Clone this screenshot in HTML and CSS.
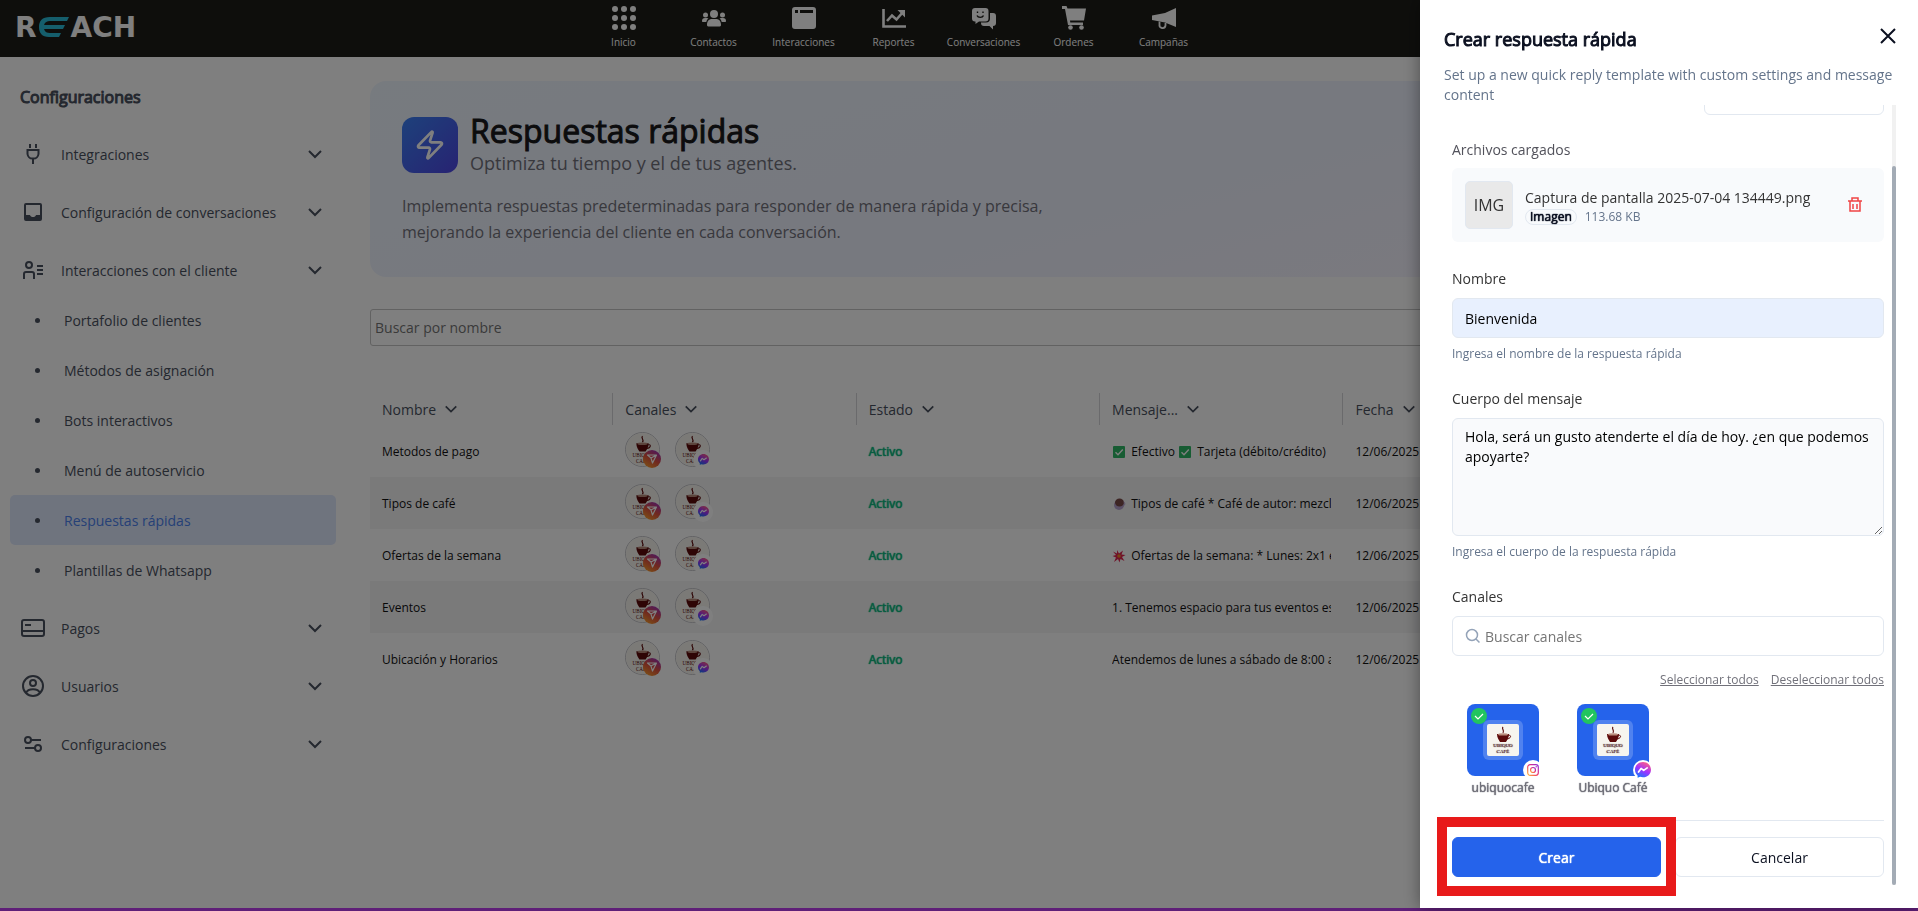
FILE: index.html
```html
<!DOCTYPE html>
<html lang="es">
<head>
  <meta charset="UTF-8">
  <meta name="viewport" content="width=device-width, initial-scale=1.0">
  <title>Reach - Respuestas rápidas</title>
  <link rel="stylesheet" href="styles.css">
</head>
<body>

  <!-- shared icons -->
  <svg class="sprite" aria-hidden="true">
    <defs>
      <linearGradient id="igGrad" x1="0" y1="1" x2="1" y2="0">
        <stop offset="0" stop-color="#fdb83a"/>
        <stop offset="0.5" stop-color="#f0306b"/>
        <stop offset="1" stop-color="#8a2be0"/>
      </linearGradient>
      <linearGradient id="igRound" x1="0.2" y1="1" x2="0.8" y2="0">
        <stop offset="0" stop-color="#f9a02c"/>
        <stop offset="0.5" stop-color="#e0503f"/>
        <stop offset="1" stop-color="#9b2fc0"/>
      </linearGradient>
      <linearGradient id="msgGrad" x1="0.2" y1="1" x2="0.7" y2="0">
        <stop offset="0" stop-color="#0a7cff"/>
        <stop offset="0.5" stop-color="#a033ff"/>
        <stop offset="1" stop-color="#ff5c87"/>
      </linearGradient>
    </defs>
    <symbol id="chevron" viewBox="0 0 16 16">
      <path d="M2 5l6 6 6-6" fill="none" stroke="currentColor" stroke-width="2"/>
    </symbol>
    <symbol id="ig-send" viewBox="0 0 18 18">
      <circle cx="9" cy="9" r="9" fill="url(#igRound)"/>
      <path d="M4.500 5h9L9.500 13 8 8zM8 8l5.500-3" fill="none" stroke="#fff" stroke-width="1.200" stroke-linejoin="round"/>
    </symbol>
    <symbol id="messenger" viewBox="0 0 16 16">
      <path d="M8 0C3.500 0 0 3.300 0 7.700c0 2.300 1 4.300 2.600 5.700v2.400l2.500-1c.9.300 1.900.5 2.900.5 4.500 0 8-3.300 8-7.600S12.500 0 8 0z" fill="url(#msgGrad)"/>
      <path d="M3.500 10l2.600-3.600 2.600 2 3.500-2.500" fill="none" stroke="#fff" stroke-width="1.700" stroke-linejoin="round" stroke-linecap="round"/>
    </symbol>
    <symbol id="instagram" viewBox="0 0 12 12">
      <rect x="0.700" y="0.700" width="10.600" height="10.600" rx="2.500" fill="none" stroke="url(#igGrad)" stroke-width="1.200"/>
      <circle cx="6" cy="6" r="2.500" fill="none" stroke="url(#igGrad)" stroke-width="1.200"/>
      <circle cx="9.200" cy="2.800" r="0.700" fill="#a033c0"/>
    </symbol>
    <symbol id="check-box" viewBox="0 0 14 14">
      <rect x="1" y="1" width="12" height="12" rx="1" fill="#2fb866"/>
      <path d="M3.500 7.200l2.500 2.500L10.800 4.500" fill="none" stroke="#fff" stroke-width="1.400"/>
    </symbol>
  </svg>
  <svg class="hidden" aria-hidden="true">
    <symbol id="cafe" viewBox="0 0 32 32">
      <rect width="32" height="32" fill="#f7f5ef"/>
      <path d="M16 3c-2 2 2 3 0 6" fill="none" stroke="#5c0a0a" stroke-width="1.2"/>
      <path d="M10 10h12c0 4-2 6-3 8h-6c-1-2-3-4-3-8z" fill="#5c0a0a"/>
      <ellipse cx="16" cy="10.400" rx="5" ry="1.200" fill="#b98b7a"/>
      <path d="M21.500 11.500c3-1 3 3-1.500 3.500" fill="none" stroke="#5c0a0a" stroke-width="1"/>
      <text x="16" y="23" class="cafe-text">UBIQUO</text>
      <text x="16" y="29" class="cafe-text">CAFÉ</text>
    </symbol>
  </svg>

  <header class="navbar">
    <a class="logo" href="#" aria-label="Reach"><span>R</span><svg class="logo-mark" viewBox="0 0 30 20"><path d="M30 0H11C3 0 0 4 0 10s3 10 10 10h10l2-4H11c-3 0-5-1-6-4h19l2-4H5c1-3 3-4 6-4h17z" fill="#2bbcd8"/></svg><span>ACH</span></a>
    <nav>
      <a href="#"><svg viewBox="0 0 24 24"><g fill="currentColor"><circle cx="3" cy="3" r="3"/><circle cx="12" cy="3" r="3"/><circle cx="21" cy="3" r="3"/><circle cx="3" cy="12" r="3"/><circle cx="12" cy="12" r="3"/><circle cx="21" cy="12" r="3"/><circle cx="3" cy="21" r="3"/><circle cx="12" cy="21" r="3"/><circle cx="21" cy="21" r="3"/></g></svg>Inicio</a>
      <a href="#"><svg viewBox="0 0 24 24"><g fill="currentColor"><circle cx="12" cy="8" r="4"/><circle cx="3.500" cy="9" r="2.500"/><circle cx="20.500" cy="9" r="2.500"/><path d="M5 19c0-4 2-6 5-6h4c3 0 5 2 5 6 0 1-1 1.500-2 1.500H7c-1 0-2-.5-2-1.500zM0 15c0-2 1-3 3-3h2c.6 0 1 .2 1.500.5C5 13.500 4.500 15 4.300 16H1c-.6 0-1-.4-1-1zM24 15c0-2-1-3-3-3h-2c-.6 0-1 .2-1.500.5 1.500 1 2 2.500 2.200 3.500H23c.6 0 1-.4 1-1z"/></g></svg>Contactos</a>
      <a href="#"><svg viewBox="0 0 24 24"><path fill="currentColor" fill-rule="evenodd" d="M3 1h18a3 3 0 0 1 3 3v16a3 3 0 0 1-3 3H3a3 3 0 0 1-3-3V4a3 3 0 0 1 3-3zm0 3v3h3V4zm5 0v3h13V4z"/></svg>Interacciones</a>
      <a href="#"><svg viewBox="0 0 24 24"><path fill="none" stroke="currentColor" stroke-width="2.600" d="M1.500 3v17.500H24M5 15l5-5.500 4.500 4L21 6"/><path fill="currentColor" d="M15.500 4H23v7.500z"/></svg>Reportes</a>
      <a href="#"><svg viewBox="0 0 24 24"><path fill="currentColor" d="M18 7h3a3 3 0 0 1 3 3v7a3 3 0 0 1-3 3v3.500L17.500 20H12a3 3 0 0 1-3-3v-.5h5a4 4 0 0 0 4-4z"/><path fill="currentColor" d="M3 2h10.500a3 3 0 0 1 3 3v7.500a3 3 0 0 1-3 3H7L3.500 18v-2.500H3a3 3 0 0 1-3-3V5a3 3 0 0 1 3-3z"/><path fill="none" stroke="#1d1d19" stroke-width="1.400" d="M5 9.500c1 2.500 5.500 2.500 6.500 0M5.500 5.500V7M11 5.500V7"/></svg>Conversaciones</a>
      <a href="#"><svg viewBox="0 0 24 24"><path fill="currentColor" d="M0 0h4.500l1 2.500H24l-2 12H8l.3 2H21V19H6L3 3H0z"/><circle fill="currentColor" cx="8.500" cy="21.500" r="2.300"/><circle fill="currentColor" cx="19.500" cy="21.500" r="2.300"/></svg>Ordenes</a>
      <a href="#"><svg viewBox="0 0 24 24"><path fill="currentColor" d="M24 2v19L13 16.500 0 14V9.500L13 7z"/><path fill="none" stroke="currentColor" stroke-width="1.800" d="M7.500 15.500v3a3 3 0 0 0 6 1V17"/></svg>Campañas</a>
    </nav>
  </header>

  <div class="page">
    <aside class="sidebar">
      <h2>Configuraciones</h2>
      <ul class="menu">
        <li><a class="menu-item" href="#"><svg class="menu-icon" viewBox="0 0 24 24"><path d="M9 2v4M15 2v4M6.500 8h11v4a5 5 0 0 1-5 4.500h-1A5 5 0 0 1 6.500 12zM12 17v5"/></svg><span>Integraciones</span><svg class="chev"><use href="#chevron"/></svg></a></li>
        <li><a class="menu-item" href="#"><svg class="menu-icon" viewBox="0 0 24 24"><rect x="4" y="4" width="16" height="16" rx="1"/><path class="solid" d="M4 15h5c.5 1.500 1.500 2 3 2s2.500-.5 3-2h5v5H4z"/></svg><span>Configuración de conversaciones</span><svg class="chev"><use href="#chevron"/></svg></a></li>
        <li>
          <a class="menu-item" href="#"><svg class="menu-icon" viewBox="0 0 24 24"><circle cx="8" cy="7" r="3"/><path d="M3 21v-5a2 2 0 0 1 2-2h6a2 2 0 0 1 2 2v5M16 8h6M16 12h6M16 16h6"/></svg><span>Interacciones con el cliente</span><svg class="chev"><use href="#chevron"/></svg></a>
          <ul class="submenu">
            <li><a href="#">Portafolio de clientes</a></li>
            <li><a href="#">Métodos de asignación</a></li>
            <li><a href="#">Bots interactivos</a></li>
            <li><a href="#">Menú de autoservicio</a></li>
            <li><a class="active" href="#">Respuestas rápidas</a></li>
            <li><a href="#">Plantillas de Whatsapp</a></li>
          </ul>
        </li>
        <li><a class="menu-item" href="#"><svg class="menu-icon" viewBox="0 0 24 24"><rect x="1" y="4" width="22" height="16" rx="2"/><path d="M1 15h22M4 9h6"/></svg><span>Pagos</span><svg class="chev"><use href="#chevron"/></svg></a></li>
        <li><a class="menu-item" href="#"><svg class="menu-icon" viewBox="0 0 24 24"><circle cx="12" cy="12" r="10"/><circle cx="12" cy="9" r="3"/><path d="M5 19c2-5 12-5 14 0"/></svg><span>Usuarios</span><svg class="chev"><use href="#chevron"/></svg></a></li>
        <li><a class="menu-item" href="#"><svg class="menu-icon" viewBox="0 0 24 24"><circle cx="7" cy="8" r="3"/><path d="M10 8h10M4 16h10"/><circle cx="17" cy="16" r="3"/></svg><span>Configuraciones</span><svg class="chev"><use href="#chevron"/></svg></a></li>
      </ul>
    </aside>

    <main>
      <section class="banner">
        <div class="banner-head">
          <div class="banner-icon">
            <svg viewBox="0 0 24 24"><path d="M4 14a1 1 0 0 1-.78-1.630l9.900-10.200a.5.5 0 0 1 .86.460l-1.920 6.020A1 1 0 0 0 13 10h7a1 1 0 0 1 .78 1.630l-9.900 10.200a.5.5 0 0 1-.86-.460l1.920-6.020A1 1 0 0 0 11 14z"/></svg>
          </div>
          <div>
            <h1>Respuestas rápidas</h1>
            <p class="subtitle">Optimiza tu tiempo y el de tus agentes.</p>
          </div>
        </div>
        <p class="banner-text">Implementa respuestas predeterminadas para responder de manera rápida y precisa, mejorando la experiencia del cliente en cada conversación.</p>
      </section>

      <input class="search" type="text" placeholder="Buscar por nombre" aria-label="Buscar por nombre">

      <table class="replies">
        <thead>
          <tr>
            <th><div>Nombre<svg><use href="#chevron"/></svg></div></th>
            <th><div>Canales<svg><use href="#chevron"/></svg></div></th>
            <th><div>Estado<svg><use href="#chevron"/></svg></div></th>
            <th><div>Mensaje...<svg><use href="#chevron"/></svg></div></th>
            <th><div>Fecha<svg><use href="#chevron"/></svg></div></th>
            <th class="last"></th>
          </tr>
        </thead>
        <tbody>
          <tr>
            <td>Metodos de pago</td>
            <td><div class="channels"><div class="avatar"><svg class="pic"><use href="#cafe"/></svg><svg class="ig"><use href="#ig-send"/></svg></div><div class="avatar"><svg class="pic"><use href="#cafe"/></svg><span class="ms"><svg><use href="#messenger"/></svg></span></div></div></td>
            <td class="status">Activo</td>
            <td><div class="msg"><svg><use href="#check-box"/></svg> Efectivo <svg><use href="#check-box"/></svg> Tarjeta (débito/crédito)</div></td>
            <td>12/06/2025</td>
            <td></td>
          </tr>
          <tr>
            <td>Tipos de café</td>
            <td><div class="channels"><div class="avatar"><svg class="pic"><use href="#cafe"/></svg><svg class="ig"><use href="#ig-send"/></svg></div><div class="avatar"><svg class="pic"><use href="#cafe"/></svg><span class="ms"><svg><use href="#messenger"/></svg></span></div></div></td>
            <td class="status">Activo</td>
            <td><div class="msg"><svg viewBox="0 0 14 14"><ellipse cx="7" cy="8" rx="5" ry="5" fill="#b7a3cf"/><ellipse cx="7.500" cy="5.500" rx="4.500" ry="4" fill="#7a4a48"/><path d="M11.500 5c2 0 1.500 4-.5 4" fill="none" stroke="#b7a3cf"/></svg> Tipos de café * Café de autor: mezcla</div></td>
            <td>12/06/2025</td>
            <td></td>
          </tr>
          <tr>
            <td>Ofertas de la semana</td>
            <td><div class="channels"><div class="avatar"><svg class="pic"><use href="#cafe"/></svg><svg class="ig"><use href="#ig-send"/></svg></div><div class="avatar"><svg class="pic"><use href="#cafe"/></svg><span class="ms"><svg><use href="#messenger"/></svg></span></div></div></td>
            <td class="status">Activo</td>
            <td><div class="msg"><svg viewBox="0 0 14 14"><path d="M5 1l2 3.500L11 1.500 9.500 5.500l4 .5L10 8l2.500 4L8.500 10 7.500 13.500 6 10l-4 3 2-4.500L.5 7 4 6 1 2.500l4 2z" fill="#e02450"/><circle cx="7" cy="7" r="1.800" fill="#f08a24"/></svg> Ofertas de la semana: * Lunes: 2x1 en</div></td>
            <td>12/06/2025</td>
            <td></td>
          </tr>
          <tr>
            <td>Eventos</td>
            <td><div class="channels"><div class="avatar"><svg class="pic"><use href="#cafe"/></svg><svg class="ig"><use href="#ig-send"/></svg></div><div class="avatar"><svg class="pic"><use href="#cafe"/></svg><span class="ms"><svg><use href="#messenger"/></svg></span></div></div></td>
            <td class="status">Activo</td>
            <td><div class="msg">1. Tenemos espacio para tus eventos es</div></td>
            <td>12/06/2025</td>
            <td></td>
          </tr>
          <tr>
            <td>Ubicación y Horarios</td>
            <td><div class="channels"><div class="avatar"><svg class="pic"><use href="#cafe"/></svg><svg class="ig"><use href="#ig-send"/></svg></div><div class="avatar"><svg class="pic"><use href="#cafe"/></svg><span class="ms"><svg><use href="#messenger"/></svg></span></div></div></td>
            <td class="status">Activo</td>
            <td><div class="msg">Atendemos de lunes a sábado de 8:00 a</div></td>
            <td>12/06/2025</td>
            <td></td>
          </tr>
        </tbody>
      </table>
    </main>
  </div>

  <div class="overlay"></div>

  <section class="drawer" role="dialog" aria-labelledby="drawerTitle">
    <div class="drawer-head">
      <h2 id="drawerTitle">Crear respuesta rápida</h2>
      <p>Set up a new quick reply template with custom settings and message content</p>
    </div>
    <button class="close" type="button" aria-label="Cerrar"><svg viewBox="0 0 16 16"><path d="M1 1l14 14M15 1L1 15"/></svg></button>

    <div class="drawer-body">
      <form class="reply-form">
        <div class="type-box"></div>

        <p class="files-label">Archivos cargados</p>
        <div class="file-card">
          <div class="thumb">IMG</div>
          <div class="file-info">
            <div class="file-name">Captura de pantalla 2025-07-04 134449.png</div>
            <div class="file-meta"><span class="badge">Imagen</span><span>113.68 KB</span></div>
          </div>
          <button class="trash" type="button" aria-label="Eliminar archivo"><svg viewBox="0 0 16 16"><path d="M1 4h14M3 4v10h10V4M5 4V1h6v3M6 7v5M10 7v5"/></svg></button>
        </div>

        <div class="field">
          <label for="nombre">Nombre</label>
          <input id="nombre" class="name-input" type="text" value="Bienvenida">
          <small>Ingresa el nombre de la respuesta rápida</small>
        </div>

        <div class="field">
          <label for="cuerpo">Cuerpo del mensaje</label>
          <textarea id="cuerpo">Hola, será un gusto atenderte el día de hoy. ¿en que podemos apoyarte?</textarea>
          <small>Ingresa el cuerpo de la respuesta rápida</small>
        </div>

        <div class="field">
          <label for="canales">Canales</label>
          <div class="search-box">
            <svg viewBox="0 0 16 16"><circle cx="7" cy="7" r="5.500"/><path d="M11 11l3.500 3.500"/></svg>
            <input id="canales" type="text" placeholder="Buscar canales">
          </div>
        </div>

        <div class="select-links">
          <a href="#">Seleccionar todos</a>
          <a href="#">Deseleccionar todos</a>
        </div>

        <div class="tiles">
          <button class="tile" type="button">
            <span class="tile-box">
              <svg class="tick" viewBox="0 0 16 16"><circle cx="8" cy="8" r="8"/><path d="M4 8l3 3 5-5"/></svg>
              <span class="tile-pic"><svg><use href="#cafe"/></svg></span>
              <span class="tile-badge"><svg class="small"><use href="#instagram"/></svg></span>
            </span>
            ubiquocafe
          </button>
          <button class="tile" type="button">
            <span class="tile-box">
              <svg class="tick" viewBox="0 0 16 16"><circle cx="8" cy="8" r="8"/><path d="M4 8l3 3 5-5"/></svg>
              <span class="tile-pic"><svg><use href="#cafe"/></svg></span>
              <span class="tile-badge"><svg><use href="#messenger"/></svg></span>
            </span>
            Ubiquo Café
          </button>
        </div>

        <div class="actions">
          <button class="btn primary" type="submit">Crear</button>
          <button class="btn" type="button">Cancelar</button>
        </div>
      </form>
      <div class="scrollbar"><div class="scroll-thumb"></div></div>
    </div>
    <div class="highlight"></div>
  </section>

</body>
</html>
```
FILE: styles.css
```css
*{
  box-sizing: border-box;
}
body{
  margin: 0;
  height: 100vh;
  display: flex;
  flex-direction: column;
  overflow: hidden;
  background-color: #ffffff;
  border-bottom: 3px solid #5f1f78;
  font-family: "Open Sans", "Noto Sans", sans-serif;
  font-size: 14px;
  color: #333333;
}
h1, h2, p, ul{
  margin: 0;
  padding: 0;
}
ul{
  list-style: none;
}
a{
  color: inherit;
  text-decoration: none;
}
button, input, textarea{
  font-family: inherit;
  font-size: 14px;
}
.sprite{
  position: absolute;
  width: 0;
  height: 0;
}
.hidden{
  display: none;
}
.cafe-text{
  font-family: "Liberation Serif", serif;
  font-size: 5px;
  text-anchor: middle;
  fill: #5c0a0a;
}
/* headings are the regular face, thickened */
h1, h2{
  font-weight: 400;
  -webkit-text-stroke: 1px currentColor;
}
.status, .badge, .tile, .btn.primary{
  font-weight: 400;
  text-shadow: 0 0 1px currentColor, 0 0 1px currentColor;
}

/* top bar */
.navbar{
  display: grid;
  grid-template-columns: 1fr auto 1fr;
  height: 57px;
  flex-shrink: 0;
  padding: 0 146px 0 15px;
  background-color: #1d1d19;
  color: #ffffff;
}
.logo{
  display: flex;
  align-items: center;
  gap: 2px;
  height: 54px;
  font-family: "DejaVu Sans", sans-serif;
  font-size: 28px;
  font-weight: 700;
}
.logo-mark{
  width: 30px;
  height: 20px;
}
.navbar nav{
  display: flex;
}
.navbar nav a{
  display: flex;
  flex-direction: column;
  align-items: center;
  gap: 4px;
  width: 90px;
  padding-top: 6px;
  font-size: 10px;
  line-height: 16px;
}
.navbar nav svg{
  width: 24px;
  height: 24px;
}

.page{
  display: flex;
  flex: 1;
  min-height: 0;
}

/* sidebar */
.sidebar{
  width: 346px;
  flex-shrink: 0;
  padding: 28px 10px;
  color: #49505e;
}
.sidebar h2{
  padding-left: 10px;
  font-size: 16px;
  line-height: 24px;
  margin-bottom: 20px;
}
.menu-item{
  display: flex;
  align-items: center;
  gap: 16px;
  height: 50px;
  margin-top: 8px;
  padding: 0 13px 0 11px;
}
.menu > li:first-child .menu-item{
  margin-top: 0;
}
.menu-item span{
  flex: 1;
}
.menu-icon{
  width: 24px;
  height: 24px;
  fill: none;
  stroke: currentColor;
  stroke-width: 2;
}
.menu-icon .solid{
  fill: currentColor;
  stroke: none;
}
.chev{
  width: 16px;
  height: 16px;
}
.submenu a{
  display: flex;
  align-items: center;
  height: 50px;
  padding-left: 25px;
  border-radius: 5px;
}
.submenu a::before{
  content: "";
  width: 5px;
  height: 5px;
  margin-right: 24px;
  border-radius: 50%;
  background-color: #49505e;
}
.submenu .active{
  background-color: #dfe8fd;
  color: #4c82ee;
}

/* content */
main{
  flex: 1;
  padding: 24px 27px 24px 24px;
}
.banner{
  height: 196px;
  padding: 32px;
  border-radius: 16px;
  background: linear-gradient(165deg, #eff6ff 0%, #eef2ff 50%, #faf5ff 100%);
}
.banner-head{
  display: flex;
  align-items: center;
  gap: 12px;
}
.banner-icon{
  display: flex;
  align-items: center;
  justify-content: center;
  width: 56px;
  height: 56px;
  border-radius: 12px;
  background: linear-gradient(135deg, #3b82f6, #4f46e5);
}
.banner-icon svg{
  width: 32px;
  height: 32px;
  fill: none;
  stroke: #ffffff;
  stroke-width: 2;
}
.banner h1{
  font-size: 32px;
  line-height: 36px;
  color: #18181b;
}
.subtitle{
  font-size: 18px;
  line-height: 28px;
  color: #71717a;
}
.banner-text{
  max-width: 672px;
  margin-top: 16px;
  font-size: 16px;
  line-height: 26px;
  color: #71717a;
}
.search{
  display: block;
  width: 100%;
  height: 37px;
  margin: 32px 0 47px;
  padding: 0 4px;
  border: 1px solid #c4c4c4;
  border-radius: 3px;
}
.replies{
  width: 100%;
  table-layout: fixed;
  border-collapse: collapse;
  font-size: 12px;
  color: #111111;
}
.replies th{
  width: 16%;
  padding: 0;
  font-size: 14px;
  font-weight: 400;
  color: #49505e;
}
.replies .last{
  width: 20%;
}
.replies th div{
  display: flex;
  align-items: center;
  gap: 8px;
  height: 32px;
  padding-left: 12px;
  border-right: 1px solid #d4d4d8;
}
.replies th svg{
  width: 14px;
  height: 14px;
}
.replies td{
  height: 52px;
  padding: 0 12px;
}
.replies tbody tr:nth-child(even){
  background-color: #f4f4f5;
}
.replies .status{
  color: #10b981;
}
.channels{
  display: flex;
  gap: 15px;
}
.avatar{
  position: relative;
  width: 35px;
  height: 35px;
  margin-bottom: 4px;
}
.avatar .pic{
  width: 35px;
  height: 35px;
  border: 1px solid #c4c4c8;
  border-radius: 50%;
}
.avatar .ig{
  position: absolute;
  right: -1px;
  bottom: -1px;
  width: 18px;
  height: 18px;
}
.ms{
  position: absolute;
  right: -3px;
  bottom: -3px;
  display: flex;
  align-items: center;
  justify-content: center;
  width: 20px;
  height: 20px;
  border-radius: 50%;
  background-color: #ffffff;
}
.ms svg{
  width: 11px;
  height: 11px;
}
.msg{
  overflow: hidden;
  white-space: nowrap;
}
.msg svg{
  width: 14px;
  height: 14px;
  margin-right: 2px;
  vertical-align: -3px;
}

.overlay{
  position: fixed;
  inset: 0 0 3px;
  background-color: rgba(0,0,0,0.5);
}

/* drawer */
.drawer{
  position: fixed;
  top: 0;
  right: 0;
  bottom: 3px;
  display: flex;
  flex-direction: column;
  width: 498px;
  padding: 25px 22px 23px 24px;
  background-color: #ffffff;
  box-shadow: 0 0 16px rgba(0,0,0,0.4);
}
.drawer-head h2{
  font-size: 18px;
  line-height: 28px;
  color: #0b1020;
}
.drawer-head p{
  margin-top: 12px;
  line-height: 20px;
  color: #64748b;
}
.close{
  position: absolute;
  top: 28px;
  right: 22px;
  display: flex;
  padding: 0;
  border: 0;
  background: none;
}
.close svg{
  width: 16px;
  height: 16px;
  stroke: #0b1020;
  stroke-width: 2;
}
.drawer-body{
  display: flex;
  flex: 1;
  gap: 8px;
  min-height: 0;
}
.reply-form{
  display: flex;
  flex-direction: column;
  justify-content: flex-end;
  flex: 1;
  min-width: 0;
  overflow: hidden;
  padding: 0 0 8px 8px;
}
.reply-form > *{
  flex-shrink: 0;
}
.scrollbar{
  width: 4px;
  padding-top: 61px;
  background-color: #f1f1f1;
}
.scroll-thumb{
  height: 100%;
  border-radius: 2px;
  background-color: #a3abb5;
}
.type-box{
  align-self: flex-end;
  width: 180px;
  height: 40px;
  margin-bottom: 25px;
  border: 1px solid #e2e8f0;
  border-radius: 6px;
}
.files-label{
  line-height: 20px;
  margin-bottom: 8px;
  color: #52525b;
}
.file-card{
  display: flex;
  align-items: center;
  gap: 12px;
  height: 74px;
  padding: 0 13px;
  margin-bottom: 27px;
  border-radius: 6px;
  background-color: #f8fafc;
}
.thumb{
  display: flex;
  align-items: center;
  justify-content: center;
  width: 48px;
  height: 48px;
  border: 1px solid #e2e8f0;
  border-radius: 5px;
  background-color: #e9e9e9;
  font-size: 16px;
}
.file-info{
  flex: 1;
  padding-top: 2px;
}
.file-name{
  line-height: 22px;
}
.file-meta{
  display: flex;
  align-items: center;
  gap: 8px;
  font-size: 12px;
  line-height: 14px;
  color: #64748b;
}
.badge{
  padding: 0 4px;
  border: 1px solid #e2e8f0;
  border-radius: 8px;
  color: #0b1020;
}
.trash{
  display: flex;
  padding: 0 8px;
  border: 0;
  background: none;
}
.trash svg{
  width: 16px;
  height: 16px;
  fill: none;
  stroke: #ef4444;
  stroke-width: 1.5;
}
.field{
  display: flex;
  flex-direction: column;
}
.field label{
  line-height: 20px;
  margin-bottom: 9px;
}
.field small{
  margin: 8px 0 27px;
  font-size: 12px;
  line-height: 16px;
  color: #64748b;
}
.name-input, .field textarea, .search-box{
  border: 1px solid #e2e8f0;
  border-radius: 6px;
}
.name-input{
  height: 40px;
  padding: 0 12px;
  background-color: #e8f0fe;
}
.field textarea{
  height: 118px;
  padding: 8px 12px;
  line-height: 20px;
  background-color: #f9fafc;
}
.search-box{
  display: flex;
  align-items: center;
  gap: 4px;
  height: 40px;
  padding: 0 12px;
}
.search-box svg{
  width: 16px;
  height: 16px;
  fill: none;
  stroke: #94a3b8;
  stroke-width: 1.5;
}
.search-box input{
  flex: 1;
  padding: 0;
  border: 0;
  background: none;
}
.select-links{
  display: flex;
  justify-content: flex-end;
  gap: 12px;
  margin: 16px 0;
  font-size: 12px;
  line-height: 16px;
  color: #71717a;
}
.select-links a{
  text-decoration: underline;
}
.tiles{
  display: flex;
  gap: 8px;
  margin-bottom: 24px;
}
.tile{
  display: flex;
  flex-direction: column;
  align-items: center;
  gap: 4px;
  width: 102px;
  padding: 0;
  border: 0;
  background: none;
  font-size: 12px;
  line-height: 16px;
  color: #71717a;
}
.tile-box{
  position: relative;
  display: flex;
  align-items: center;
  justify-content: center;
  width: 72px;
  height: 72px;
  border-radius: 8px;
  background-color: #2563eb;
}
.tick{
  position: absolute;
  top: 4px;
  left: 4px;
  width: 16px;
  height: 16px;
  fill: #22c55e;
}
.tick path{
  fill: none;
  stroke: #ffffff;
  stroke-width: 1.2;
}
.tile-pic{
  display: flex;
  padding: 4px;
  border-radius: 6px;
  background-color: rgba(255,255,255,0.2);
}
.tile-pic svg{
  width: 32px;
  height: 32px;
  border-radius: 2px;
}
.tile-badge{
  position: absolute;
  right: -4px;
  bottom: -4px;
  display: flex;
  align-items: center;
  justify-content: center;
  width: 20px;
  height: 20px;
  border-radius: 50%;
  background-color: #ffffff;
}
.tile-badge svg{
  width: 16px;
  height: 16px;
}
.tile-badge .small{
  width: 12px;
  height: 12px;
}
.actions{
  display: flex;
  gap: 14px;
  padding-top: 16px;
  border-top: 1px solid #e2e8f0;
}
.btn{
  flex: 1;
  height: 40px;
  border: 1px solid #e2e8f0;
  border-radius: 6px;
  background-color: #ffffff;
  color: #0b1020;
}
.btn.primary{
  border-color: #2563eb;
  background-color: #2563eb;
  color: #ffffff;
}
.highlight{
  position: absolute;
  left: 17px;
  bottom: 12px;
  width: 239px;
  height: 79px;
  border: 10px solid #e81a1a;
  pointer-events: none;
}
```
